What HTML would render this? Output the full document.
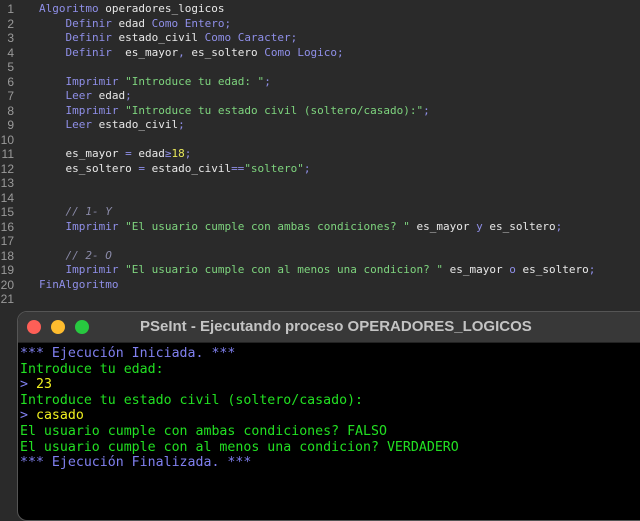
<!DOCTYPE html>
<html><head><meta charset="utf-8"><style>
*{margin:0;padding:0;box-sizing:border-box}
body{width:640px;height:508px;overflow:hidden;background:#2a2a2a;position:relative;font-family:"DejaVu Sans Mono","Liberation Mono",monospace}
.ed{position:absolute;left:0;top:2px;font-size:11px;line-height:14.5px;color:#e8e8e8}
.ln{position:absolute;left:0;top:0;width:14px;text-align:right;color:#9a9a9a;font-family:"Liberation Sans",sans-serif;font-size:12px;line-height:14.5px}
.code{position:absolute;left:39px;top:0;white-space:pre}
.k{color:#8f8fe8}.s{color:#7ed47e}.c{color:#8a8aa8;font-style:italic}.n{color:#e8e85a}
.win{position:absolute;left:17px;top:311px;width:640px;height:210px;border-radius:10px;overflow:hidden;border:1px solid #555;background:#000}
.tb{height:31px;background:#383838;position:relative;border-bottom:1px solid #222}
.dot{position:absolute;top:8px;width:14px;height:14px;border-radius:50%}
.title{position:absolute;left:122px;top:6px;font:bold 15px "Liberation Sans",sans-serif;color:#c4c4c4;white-space:nowrap}
.term{position:absolute;left:2px;top:34px;font-size:13.25px;line-height:15.6px;white-space:pre;color:#22e022}
.b{color:#8080f0}.y{color:#f0f020}
</style></head><body>
<div class="ed"><div class="ln">1<br>2<br>3<br>4<br>5<br>6<br>7<br>8<br>9<br>10<br>11<br>12<br>13<br>14<br>15<br>16<br>17<br>18<br>19<br>20<br>21</div><div class="code"><span class="k">Algoritmo</span> operadores_logicos
    <span class="k">Definir</span> edad <span class="k">Como Entero;</span>
    <span class="k">Definir</span> estado_civil <span class="k">Como Caracter;</span>
    <span class="k">Definir</span>  es_mayor<span class="k">,</span> es_soltero <span class="k">Como Logico;</span>

    <span class="k">Imprimir</span> <span class="s">"Introduce tu edad: "</span><span class="k">;</span>
    <span class="k">Leer</span> edad<span class="k">;</span>
    <span class="k">Imprimir</span> <span class="s">"Introduce tu estado civil (soltero/casado):"</span><span class="k">;</span>
    <span class="k">Leer</span> estado_civil<span class="k">;</span>

    es_mayor <span class="k">=</span> edad<span class="k">≥</span><span class="n">18</span><span class="k">;</span>
    es_soltero <span class="k">=</span> estado_civil<span class="k">==</span><span class="s">"soltero"</span><span class="k">;</span>


    <span class="c">// 1- Y</span>
    <span class="k">Imprimir</span> <span class="s">"El usuario cumple con ambas condiciones? "</span> es_mayor <span class="k">y</span> es_soltero<span class="k">;</span>

    <span class="c">// 2- O</span>
    <span class="k">Imprimir</span> <span class="s">"El usuario cumple con al menos una condicion? "</span> es_mayor <span class="k">o</span> es_soltero<span class="k">;</span>
<span class="k">FinAlgoritmo</span></div></div>
<div class="win">
<div class="tb">
<div class="dot" style="left:9px;background:#fe5f57"></div>
<div class="dot" style="left:33px;background:#febc2e"></div>
<div class="dot" style="left:57px;background:#28c840"></div>
<div class="title">PSeInt - Ejecutando proceso OPERADORES_LOGICOS</div>
</div>
<div class="term"><span class="b">*** Ejecución Iniciada. ***</span>
Introduce tu edad:
<span class="b">&gt;</span> <span class="y">23</span>
Introduce tu estado civil (soltero/casado):
<span class="b">&gt;</span> <span class="y">casado</span>
El usuario cumple con ambas condiciones? FALSO
El usuario cumple con al menos una condicion? VERDADERO
<span class="b">*** Ejecución Finalizada. ***</span></div>
</div>
</body></html>
